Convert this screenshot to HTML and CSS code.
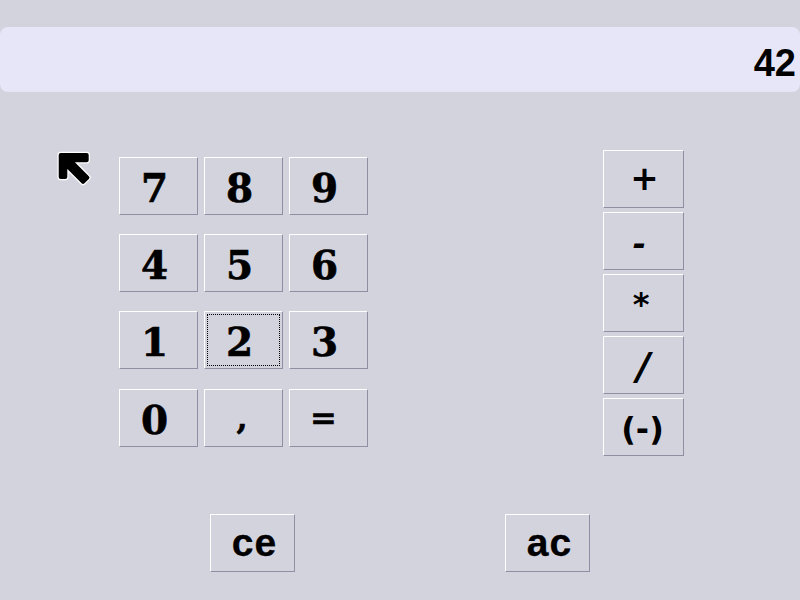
FILE: index.html
```html
<!DOCTYPE html>
<html lang="en">
<head>
  <meta charset="UTF-8">
  <meta name="viewport" content="width=device-width, initial-scale=1.0">
  <title>Calculator</title>
  <link rel="stylesheet" href="styles.css">
</head>
<body>
  <div class="display">42</div>

  <div class="keys">
    <button class="back" aria-label="Back">
      <svg width="38" height="38" viewBox="0 0 38 38">
        <path d="M5.7 5H31.7V10.3H15.2L32.45 27.55L28.05 31.95L10.3 14.2V27H5.7Z" fill="#fff" stroke="#fff" stroke-width="6.5" stroke-linejoin="round"/>
        <path d="M5.7 5H31.7V10.3H15.2L32.45 27.55L28.05 31.95L10.3 14.2V27H5.7Z" fill="#000" stroke="#000" stroke-width="4" stroke-linejoin="round"/>
      </svg>
    </button>

    <div class="numpad">
      <button class="key num">7</button>
      <button class="key num">8</button>
      <button class="key num">9</button>
      <button class="key num">4</button>
      <button class="key num">5</button>
      <button class="key num">6</button>
      <button class="key num">1</button>
      <button class="key num focused">2</button>
      <button class="key num">3</button>
      <button class="key num">0</button>
      <button class="key num comma">,</button>
      <button class="key num equals">=</button>
    </div>

    <div class="ops">
      <button class="key op plus">+</button>
      <button class="key op minus">-</button>
      <button class="key op times">*</button>
      <button class="key op slash">/</button>
      <button class="key op negate">(-)</button>
    </div>
  </div>

  <div class="clear">
    <button class="key wide">ce</button>
    <button class="key wide">ac</button>
  </div>
</body>
</html>
```

FILE: styles.css
```css
body {
  margin: 0;
  width: 800px;
  height: 600px;
  overflow: hidden;
  padding-top: 27px;
  box-sizing: border-box;
  background-color: #d3d3de;
  font-family: "Liberation Sans", Arial, sans-serif;
}

.display {
  height: 65px;
  line-height: 73px;
  padding-right: 4px;
  text-align: right;
  background-color: #e6e6f8;
  border-radius: 8px;
  font-size: 38px;
  font-weight: bold;
  color: #000;
}

.keys {
  display: flex;
  align-items: flex-start;
  margin-top: 58px;
  padding-left: 55px;
}

.back {
  width: 38px;
  height: 38px;
  margin-right: 26px;
  padding: 0;
  border: none;
  background: none;
}

.back svg {
  display: block;
}

.key {
  height: 58px;
  padding: 0;
  box-sizing: border-box;
  background-color: #d3d3de;
  border: 1px solid;
  border-color: #fff #8f8fa3 #8f8fa3 #fff;
  color: #000;
  font-weight: bold;
}

.numpad {
  display: grid;
  grid-template-columns: repeat(3, 79px);
  grid-template-rows: 77px 77px 78px 58px;
  column-gap: 6px;
  margin-top: 7px;
}

.num {
  padding: 2px 8px 0 0;
  font-family: "DejaVu Serif", serif;
  font-size: 39px;
  line-height: 56px;
  -webkit-text-stroke: 0.6px #000;
}

.comma {
  padding: 0 3px 6px 0;
  font-size: 32px;
}

.equals {
  padding: 0 10px 4px 0;
  font-size: 32px;
}

.focused {
  outline: 1px dotted #000;
  outline-offset: -4px;
}

.ops {
  display: flex;
  flex-direction: column;
  gap: 4px;
  margin-left: 235px;
}

.op {
  width: 81px;
  font-family: "DejaVu Sans", sans-serif;
  font-size: 32px;
}

.plus {
  padding: 0 0 2px 2px;
  font-size: 34px;
}

.minus {
  padding: 6px 8px 0 0;
  font-style: italic;
}

.times {
  padding: 2px 5px 0 0;
}

.slash {
  padding: 2px 0 0 0;
  font-size: 38px;
  font-style: italic;
}

.negate {
  padding: 4px 2px 0 0;
}

.clear {
  display: flex;
  gap: 210px;
  margin-top: 58px;
  padding-left: 210px;
}

.wide {
  width: 85px;
  padding-left: 4px;
  font-family: "Liberation Sans", Arial, sans-serif;
  font-size: 39px;
  letter-spacing: 1px;
  -webkit-text-stroke: 0.3px #000;
}
```
